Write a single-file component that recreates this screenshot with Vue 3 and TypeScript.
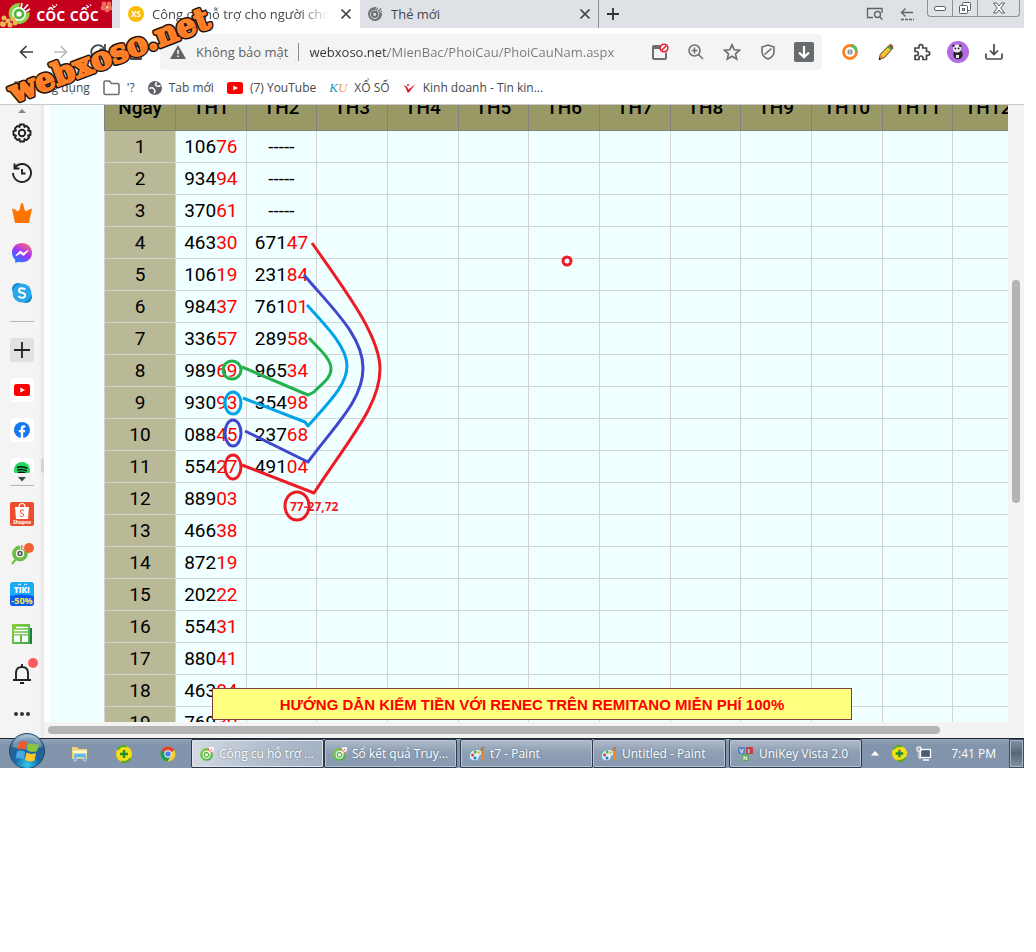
<script setup lang="ts">
interface ResultRow {
  day: number
  first: string
  second?: string
}

const months: string[] = Array.from({ length: 12 }, (_, i) => `TH${i + 1}`)

const rows: ResultRow[] = [
  { day: 1, first: '10676', second: '-----' },
  { day: 2, first: '93494', second: '-----' },
  { day: 3, first: '37061', second: '-----' },
  { day: 4, first: '46330', second: '67147' },
  { day: 5, first: '10619', second: '23184' },
  { day: 6, first: '98437', second: '76101' },
  { day: 7, first: '33657', second: '28958' },
  { day: 8, first: '98969', second: '96534' },
  { day: 9, first: '93093', second: '35498' },
  { day: 10, first: '08845', second: '23768' },
  { day: 11, first: '55427', second: '49104' },
  { day: 12, first: '88903' },
  { day: 13, first: '46638' },
  { day: 14, first: '87219' },
  { day: 15, first: '20222' },
  { day: 16, first: '55431' },
  { day: 17, first: '88041' },
  { day: 18, first: '46384' },
  { day: 19, first: '76930' },
]

const isNumber = (v?: string): boolean => !!v && v[0] !== '-'
</script>

<template>
  <div class="desktop">
    <svg class="defs" aria-hidden="true">
      <defs>
        <linearGradient id="gGreen" x1="0" y1="0" x2="1" y2="1">
          <stop offset="0" stop-color="#8ccf3f" /><stop offset="1" stop-color="#3fae49" />
        </linearGradient>
        <linearGradient id="gMess" x1="0.2" y1="1" x2="0.8" y2="0">
          <stop offset="0" stop-color="#0a8cff" /><stop offset="0.5" stop-color="#a033ff" /><stop offset="1" stop-color="#ff6b6b" />
        </linearGradient>
        <linearGradient id="gOrange" x1="0" y1="0" x2="0" y2="1">
          <stop offset="0" stop-color="#ff9a3c" /><stop offset="1" stop-color="#ff6618" />
        </linearGradient>
        <radialGradient id="gOrb" cx="0.5" cy="0.9" r="0.9">
          <stop offset="0" stop-color="#35c8ee" /><stop offset="0.4" stop-color="#1769a5" /><stop offset="0.75" stop-color="#2f5f8a" /><stop offset="1" stop-color="#a8c3d8" />
        </radialGradient>
      </defs>
      <symbol id="coccoc" viewBox="0 0 16 16">
        <circle cx="7.500" cy="8.500" r="7.300" fill="url(#gGreen)" />
        <circle cx="7.500" cy="8.800" r="4.500" fill="#fff" />
        <circle cx="7.500" cy="8.800" r="2.600" fill="none" stroke="#5dbb45" stroke-width="1.600" />
        <path d="M8.500 5L9.500 .5 16 0 15.500 6.500 11 8Z" fill="#fff" opacity=".9" />
        <path d="M9.500 4.500L10 1.500M11 5.500L13.500 2.500M12 7L15 5.500" stroke="#e8483b" stroke-width="1.100" />
      </symbol>
      <symbol id="coccocgray" viewBox="0 0 16 16">
        <path d="M9 1A7 7 0 1 0 15 7L12 7.500A4.500 4.500 0 1 1 8.500 4Z" fill="#6d7175" />
        <circle cx="7.700" cy="8.300" r="2.700" fill="none" stroke="#6d7175" stroke-width="2.200" />
        <path d="M9.500 4.500L10.500 1.500M11 5.500L14 2.500M12 7L15 5" stroke="#6d7175" stroke-width="1.200" />
      </symbol>
      <symbol id="cross" viewBox="0 0 12 12">
        <path d="M1.500 1.500L10.500 10.500M10.500 1.500L1.500 10.500" stroke="#3c4043" stroke-width="1.700" />
      </symbol>
      <symbol id="youtube" viewBox="0 0 16 12">
        <rect width="16" height="12" rx="2.500" fill="#f00" /><path d="M6.300 3.400L11 6 6.300 8.600Z" fill="#fff" />
      </symbol>
      <symbol id="paint" viewBox="0 0 16 16">
        <path d="M.5 11C0 6 4 3 9 3.500c5 .5 5 5.500 2.500 6-2 .5-1 2-2 3.500-1.500 2.500-8.500 2.500-9-2Z" fill="#d7edf8" stroke="#5b96bc" stroke-width=".7" />
        <circle cx="3.600" cy="9" r="1.500" fill="#e33b2e" /><circle cx="6.200" cy="6" r="1.400" fill="#45a83a" /><circle cx="9.800" cy="6.500" r="1.300" fill="#f3b21c" /><circle cx="6" cy="12" r="1.500" fill="#2a75cf" />
        <path d="M14.500 4V11L13 15.800 12 11 12 4Z" fill="#f18a22" /><path d="M11.300 5L12 1.500 15 .5 14.800 5Z" fill="#b9814a" />
      </symbol>
      <symbol id="plusball" viewBox="0 0 18 18">
        <circle cx="9" cy="9" r="8" fill="#f7de12" />
        <path d="M2.500 4.500A8 8 0 0 1 11.500 1.500M15.500 13.500A8 8 0 0 1 6.500 16.500" fill="none" stroke="#5cab28" stroke-width="2.200" />
        <path d="M9 5V13M5 9H13" stroke="#1d8f30" stroke-width="2.400" />
      </symbol>
    </svg>

    <header class="browser">
      <div class="tabstrip">
        <button class="brand" aria-label="Cốc Cốc">
          <svg class="brand-flower" viewBox="0 0 112 28" aria-hidden="true">
            <path d="M20 3A10.500 10.500 0 1 0 29.500 12L25 13A6 6 0 1 1 19 8Z" fill="#8ccf3f" />
            <circle cx="19" cy="14" r="7" fill="#fff" /><circle cx="19" cy="14" r="4" fill="none" stroke="#54b648" stroke-width="2.800" />
            <path d="M21 8L22 3M24 9L28 4.500M25 12L30 9" stroke="#fff" stroke-width="1.700" />
            <g fill="#e9b856">
              <circle cx="4" cy="18" r="2.500" /><circle cx="8" cy="21" r="2.500" /><circle cx="3" cy="24" r="3" /><circle cx="13" cy="19" r="2.500" /><circle cx="15" cy="23" r="2.500" /><circle cx="10" cy="25" r="2.500" />
            </g>
            <circle cx="4" cy="21" r="1.200" fill="#b9372a" /><circle cx="12" cy="22" r="1.200" fill="#b9372a" />
            <g fill="#ef6b5e">
              <circle cx="104" cy="4" r="2.400" /><circle cx="109" cy="4" r="2.400" /><circle cx="103" cy="8" r="2.400" /><circle cx="110" cy="8" r="2.400" /><circle cx="107" cy="10" r="2.400" />
            </g>
            <circle cx="107" cy="7" r="1.500" fill="#f9d47b" />
            <path d="M52 5l3 2M56 4l1 2M86 5l3 2M90 4l1 2" stroke="#fff" stroke-width="1" />
          </svg>
          <span>cốc cốc</span>
        </button>
        <div class="tab active">
          <span class="xs">XS</span>
          <span class="tab-title">Công cụ hỗ trợ cho người chơi</span>
          <button class="icon-btn" aria-label="Đóng thẻ"><svg width="12" height="12"><use href="#cross" /></svg></button>
        </div>
        <div class="tab">
          <svg width="16" height="16"><use href="#coccocgray" /></svg>
          <span class="tab-title">Thẻ mới</span>
          <button class="icon-btn" aria-label="Đóng thẻ"><svg width="12" height="12"><use href="#cross" /></svg></button>
        </div>
        <button class="icon-btn new-tab" aria-label="Thẻ mới">
          <svg width="12" height="12" viewBox="0 0 12 12"><path d="M6 0V12M0 6H12" stroke="#303336" stroke-width="1.800" /></svg>
        </button>
        <div class="strip-tools">
          <button class="icon-btn" aria-label="Tìm trong thẻ">
            <svg width="18" height="14" viewBox="0 0 18 14" fill="none" stroke="#5f6368" stroke-width="1.300"><path d="M7 10.500H1.500V1.500H16V6" /><circle cx="11.500" cy="7.500" r="3" /><path d="M13.800 9.800L16.500 12.800" /></svg>
          </button>
          <button class="icon-btn" aria-label="Quay lại">
            <svg width="14" height="14" viewBox="0 0 14 14" fill="none" stroke="#5f6368" stroke-width="1.300"><path d="M13 5.500H1.500M5.500 1.500L1.500 5.500 5.500 9.500" /><path d="M1 12.500H14" stroke-dasharray="3 1" /></svg>
          </button>
        </div>
        <div class="win-controls">
          <button aria-label="Thu nhỏ"><svg width="14" height="8" viewBox="0 0 14 8"><rect x="1.500" y="2.500" width="11" height="4" rx="1.500" fill="#fff" stroke="#5a5e66" /></svg></button>
          <button aria-label="Khôi phục"><svg width="14" height="14" viewBox="0 0 14 14" fill="#fff" stroke="#5a5e66"><rect x="4.500" y="1.500" width="8" height="8" rx="1" /><rect x="1.500" y="4.500" width="8" height="8" rx="1" /><rect x="4.500" y="7.500" width="2" height="2" /></svg></button>
          <button class="win-close" aria-label="Đóng"><svg width="14" height="12" viewBox="0 0 14 12"><path d="M1.500 1H4.500L7 4 9.500 1H12.500L8.700 6 12.500 11H9.500L7 8 4.500 11H1.500L5.300 6Z" fill="#fff" stroke="#5a5e66" /></svg></button>
        </div>
      </div>

      <nav class="toolbar">
        <div class="nav-buttons">
          <button class="icon-btn" aria-label="Trước"><svg width="14" height="14" viewBox="0 0 14 14" fill="none" stroke="#3c4043" stroke-width="1.700"><path d="M14 7H1.500M7.500 1L1.500 7 7.500 13" /></svg></button>
          <button class="icon-btn" aria-label="Sau"><svg width="14" height="14" viewBox="0 0 14 14" fill="none" stroke="#b8bbbe" stroke-width="1.700"><path d="M0 7H12.500M6.500 1L12.500 7 6.500 13" /></svg></button>
          <button class="icon-btn" aria-label="Tải lại"><svg width="18" height="18" viewBox="0 0 18 18" fill="none" stroke="#45494d" stroke-width="1.800"><path d="M15.500 6A7 7 0 1 0 16 11M16 1V6.500H10.500" /></svg></button>
          <button class="icon-btn" aria-label="Trang chủ"><svg width="16" height="18" viewBox="0 0 16 18" fill="none" stroke="#45494d" stroke-width="1.800"><path d="M1 8L8 2 15 8M3 7V16H13V7M7 16V11H10V16" /></svg></button>
        </div>
        <div class="address">
          <svg width="16" height="14" viewBox="0 0 16 14"><path d="M8 0L16 14H0Z" fill="#5f6368" /><path d="M8 5V9M8 10.500V12" stroke="#fff" stroke-width="1.500" /></svg>
          <span class="insecure">Không bảo mật</span>
          <input class="url" type="text" aria-label="Địa chỉ" value="webxoso.net/MienBac/PhoiCau/PhoiCauNam.aspx" />
          <div class="address-tools">
            <button class="icon-btn" aria-label="Chặn cửa sổ"><svg width="18" height="18" viewBox="0 0 18 18"><path d="M9 2H3Q1 2 1 4V15Q1 17 3 17H14Q16 17 16 15V9.500H14V15H3V6H9Z" fill="#6b6f73" /><circle cx="13" cy="5" r="3.800" fill="#fff" stroke="#e81c2e" stroke-width="1.600" /><path d="M10.500 7.500L15.500 2.500" stroke="#e81c2e" stroke-width="1.500" /></svg></button>
            <button class="icon-btn" aria-label="Thu phóng"><svg width="16" height="16" viewBox="0 0 16 16" fill="none" stroke="#6b6f73" stroke-width="1.500"><circle cx="6.500" cy="6.500" r="5.500" /><path d="M10.500 10.500L15 15M6.500 3.500V9.500M3.500 6.500H9.500" /></svg></button>
            <button class="icon-btn" aria-label="Đánh dấu"><svg width="18" height="18" viewBox="0 0 18 18" fill="none" stroke="#6b6f73" stroke-width="1.600"><path d="M9 1.800L11.200 6.700 16.500 7.200 12.500 10.800 13.700 16 9 13.200 4.300 16 5.500 10.800 1.500 7.200 6.800 6.700Z" /></svg></button>
            <button class="icon-btn" aria-label="Bảo vệ"><svg width="14" height="16" viewBox="0 0 14 16" fill="none" stroke="#6b6f73" stroke-width="1.600"><path d="M7 1L13 3V8Q13 12.500 7 15 1 12.500 1 8V3ZM3.500 10.500L10.500 4.500" /></svg></button>
            <button class="icon-btn" aria-label="Tải video"><svg width="20" height="20" viewBox="0 0 20 20"><rect width="20" height="20" rx="2" fill="#696c6e" /><path d="M10 4V15M5 10.500L10 15.200 15 10.500" fill="none" stroke="#fff" stroke-width="2.200" /></svg></button>
          </div>
        </div>
        <div class="extensions">
          <button class="icon-btn" aria-label="Tiết kiệm"><svg width="16" height="16" viewBox="0 0 16 16" fill="none"><circle cx="8" cy="8" r="6.500" stroke="#fb8122" stroke-width="2.800" /><path d="M9 1.600A6.500 6.500 0 0 1 14.400 7.500" stroke="#5fb76a" stroke-width="3" /><circle cx="8" cy="8" r="2.700" fill="#777e88" stroke="#c9ced2" /><path d="M8 6V10" stroke="#fff" /></svg></button>
          <button class="icon-btn" aria-label="Bút vẽ"><svg width="16" height="18" viewBox="0 0 16 18"><path d="M1 16.500L2.500 11 11 2.500 15 5 6.500 14.500Z" fill="#f6c62d" stroke="#3b3524" /><path d="M10 3.500L14 6.500" stroke="#37a346" stroke-width="1.800" /><path d="M11 2.500L12.500 1 15 3 14.500 5Z" fill="#ee4a3d" stroke="#3b3524" stroke-width=".5" /><path d="M2.500 11L6 14.500 1 16.500Z" fill="#e58b43" /><path d="M1 17V14.500L3.500 16Z" fill="#222" /></svg></button>
          <button class="icon-btn" aria-label="Tiện ích"><svg width="18" height="18" viewBox="0 0 18 18" fill="none" stroke="#45494d" stroke-width="1.700"><path d="M2 5H6V3.500A1.900 1.900 0 0 1 9.800 3.500V5H13.500V8.500H14.800A1.900 1.900 0 0 1 14.800 12.300H13.500V16.500H10V15A2 2 0 0 0 6 15V16.500H2V12.500H3.300A2 2 0 0 0 3.300 8.500H2Z" /></svg></button>
          <button class="icon-btn" aria-label="Hồ sơ"><svg width="22" height="22" viewBox="0 0 22 22"><circle cx="11" cy="11" r="11" fill="#b46ae0" /><ellipse cx="11" cy="13.500" rx="4.700" ry="4.800" fill="#26232b" /><circle cx="10" cy="7.500" r="4" fill="#eee" /><circle cx="6.500" cy="4.800" r="1.300" fill="#333" /><circle cx="13.200" cy="4.800" r="1.300" fill="#333" /><circle cx="8.400" cy="7.500" r=".9" fill="#222" /><circle cx="11.600" cy="7.500" r=".9" fill="#222" /><path d="M9 14H12V17H9Z" fill="#eee" /></svg></button>
          <button class="icon-btn" aria-label="Tải xuống"><svg width="18" height="18" viewBox="0 0 18 18" fill="none" stroke="#45494d" stroke-width="1.700"><path d="M1 10.500V14.500Q1 16 2.500 16H15.500Q17 16 17 14.500V10.500M9 1V11.500M5 7.500L9 11.500 13 7.500" /></svg></button>
        </div>
      </nav>

      <nav class="bookmarks">
        <a href="#"><svg width="14" height="14" viewBox="0 0 14 14" fill="none" stroke="#6b6f73" stroke-width="1.500"><rect x="1" y="1" width="4.500" height="4.500" /><rect x="8.500" y="1" width="4.500" height="4.500" /><rect x="1" y="8.500" width="4.500" height="4.500" /></svg>Ứng dụng</a>
        <a href="#"><svg width="17" height="16" viewBox="0 0 17 16" fill="none" stroke="#6b6f73" stroke-width="1.600"><path d="M1 2.500Q1 1 2.500 1H6.500L8.500 3.500H14.500Q16 3.500 16 5V13Q16 14.500 14.500 14.500H2.500Q1 14.500 1 13Z" /></svg>'?</a>
        <a href="#"><svg width="14" height="14" viewBox="0 0 14 14"><circle cx="7" cy="7" r="7" fill="#5f6368" /><path d="M1.500 7.500Q4 6 5.500 7.500T7 10.500Q6 11.500 6.500 12.500M12.500 4.500Q9.500 6 8 4.500T9 1.500" fill="none" stroke="#fff" stroke-width="1.500" /></svg>Tab mới</a>
        <a href="#"><svg width="16" height="12"><use href="#youtube" /></svg>(7) YouTube</a>
        <a href="#"><span class="ku">K<b>U</b></span>XỔ SỐ</a>
        <a href="#"><svg width="13" height="12" viewBox="0 0 13 12"><path d="M0 3L4 4.500 5.500 7.500 12.500 2 6 10.500H4.500L2.500 5.500Z" fill="#d71f35" /><circle cx="5" cy="3" r="1" fill="#d71f35" /></svg>Kinh doanh - Tin kin...</a>
      </nav>
    </header>

    <main class="body">
      <aside class="sidebar">
        <svg class="tri" width="8" height="8" viewBox="0 0 8 8"><path d="M0 8L4 4 8 8Z" fill="#888" /></svg>
        <button aria-label="Cài đặt"><svg width="20" height="20" viewBox="0 0 20 20" fill="none" stroke="#222" stroke-width="1.900"><path d="M8 1.500H12L12.500 4 14.500 2.900 17.100 5.500 16 7.500 18.500 8V12L16 12.500 17.100 14.500 14.500 17.100 12.500 16 12 18.500H8L7.500 16 5.500 17.100 2.900 14.500 4 12.500 1.500 12V8L4 7.500 2.900 5.500 5.500 2.900 7.500 4Z" stroke-linejoin="round" /><circle cx="10" cy="10" r="3.200" /></svg></button>
        <button aria-label="Lịch sử"><svg width="20" height="20" viewBox="0 0 20 20" fill="none" stroke="#222" stroke-width="1.900"><path d="M1 10A9 9 0 1 0 3 4.300M2.500 .5V5.500H7.500M10 6V10.500H13.500" /></svg></button>
        <button aria-label="Điểm thưởng"><svg width="20" height="20" viewBox="0 0 20 20"><path d="M0 5.500Q3 6 6 8.500Q8.500 6 8.500 2 9 0 10 0T11.500 2Q11.500 6 14 8.500 17 6 20 5.500L17 20H3Z" fill="#ff7300" /></svg></button>
        <button aria-label="Messenger"><svg width="20" height="20" viewBox="0 0 20 20"><path d="M10 0C4.300 0 0 4.100 0 9.600 0 12.500 1.200 15 3.200 16.700L3.300 20 6.500 18.700C12.500 20.500 20 17.500 20 9.600 20 4.100 15.700 0 10 0Z" fill="url(#gMess)" /><path d="M4 12.500L8.200 8 11.500 10.300 16 7.500 11.800 12.500 8.500 10.300Z" fill="#fff" stroke="#fff" /></svg></button>
        <button aria-label="Skype"><svg width="20" height="20" viewBox="0 0 20 20"><circle cx="6" cy="6" r="6" fill="#1583c5" /><circle cx="14" cy="14" r="6" fill="#1583c5" /><circle cx="10" cy="10" r="9.500" fill="#28a8ea" /><path d="M13.300 6.500Q12 5.200 9.800 5.200 7 5.300 7 7.400 7 9.200 10 9.800 13.200 10.500 13.200 12.500 13 14.800 10 14.800 7.500 14.800 6.500 13" fill="none" stroke="#fff" stroke-width="2" /></svg></button>
        <hr />
        <button aria-label="Thêm"><span class="tile plus"><svg width="16" height="16" viewBox="0 0 16 16"><path d="M8 0V16M0 8H16" stroke="#222" stroke-width="1.800" /></svg></span></button>
        <button aria-label="YouTube"><span class="tile"><svg width="16" height="12"><use href="#youtube" /></svg></span></button>
        <button aria-label="Facebook"><span class="tile"><svg width="16" height="16" viewBox="0 0 16 16"><circle cx="8" cy="8" r="8" fill="#1877f2" /><path d="M6.800 16V10.300H4.800V8H6.800V6.300Q6.800 3.300 9.700 3.300L11.300 3.500V5.400H10.300Q9.200 5.400 9.200 6.600V8H11.200L10.900 10.300H9.200V16Z" fill="#fff" /></svg></span></button>
        <button class="cut" aria-label="Spotify"><span class="tile"><svg width="16" height="16" viewBox="0 0 16 16"><circle cx="8" cy="8" r="8" fill="#1ed760" /><path d="M3 5.500Q8.500 3.500 13.500 6.300M3.500 8.200Q8.500 6.500 12.700 9M4 10.800Q8 9.500 11.800 11.500" stroke="#111" stroke-width="1.500" fill="none" /></svg></span></button>
        <svg class="tri down" width="8" height="5" viewBox="0 0 8 5"><path d="M0 0H8L4 4.500Z" fill="#444" /></svg>
        <hr class="tight" />
        <button aria-label="Shopee"><svg width="24" height="24" viewBox="0 0 24 24"><rect width="24" height="24" rx="2" fill="#ee4d2d" /><path d="M5 5H19L18 17H6Z" fill="#fff" /><path d="M9 5Q9 1.500 12 1.500T15 5" fill="none" stroke="#fff" stroke-width="1.200" /><path d="M14 8.500Q12.500 7.500 11 8T11 11Q14.500 11.800 13.800 13.500T9.800 14" fill="none" stroke="#ee4d2d" stroke-width="1" /><text x="12" y="22" text-anchor="middle" class="shopee">Shopee</text></svg></button>
        <button aria-label="Tìm kiếm Cốc Cốc"><svg width="24" height="24" viewBox="0 0 24 24"><path d="M2 22L7 16" stroke="#78bf3c" stroke-width="2" /><circle cx="10" cy="11.500" r="6" fill="#fff" stroke="#6abf45" stroke-width="3.800" /><circle cx="10" cy="11.500" r="2" fill="#ddd" stroke="#555" stroke-width="1.500" /><path d="M11.500 7L12 3M13.500 8L16.500 5" stroke="#fff" stroke-width="3" /><path d="M11.500 7L12 3M13.500 8L16.500 5" stroke="#e85037" stroke-width="1.200" /></svg><i class="dot orange"></i></button>
        <button aria-label="Tiki"><svg width="24" height="24" viewBox="0 0 24 24"><rect width="24" height="24" rx="3" fill="#1baaf4" /><path d="M0 14Q12 11 24 14V21Q24 24 21 24H3Q0 24 0 21Z" fill="#0d5df0" /><text x="12" y="11" text-anchor="middle" class="tiki">TIKI</text><text x="12" y="22" text-anchor="middle" class="sale">-50%</text><path d="M8 3Q9.500 1 11 3M14 3Q15.500 1 17 3" stroke="#fff" fill="none" /></svg></button>
        <button aria-label="Tin tức"><svg width="20" height="20" viewBox="0 0 20 20"><path d="M16 4H20V20H16Z" fill="#217d46" /><rect width="18" height="20" fill="url(#gGreen)" /><path d="M4 3.500H16M2 6.500H16M2 9.500H16" stroke="#fff" stroke-width="1.300" /><path d="M2 11.500H8V18H2ZM10 11.500H16V18H10Z" fill="#fff" /></svg></button>
        <button aria-label="Thông báo"><svg width="18" height="20" viewBox="0 0 18 20" fill="none" stroke="#222" stroke-width="1.900"><path d="M0 16H18M3 16V9Q3 3 9 3T15 9V16M9 0V3M7 19H11" /></svg><i class="dot red"></i></button>
        <button aria-label="Thêm tùy chọn"><svg width="16" height="4" viewBox="0 0 16 4" fill="#333"><circle cx="2" cy="2" r="2" /><circle cx="8" cy="2" r="2" /><circle cx="14" cy="2" r="2" /></svg></button>
        <i class="handle"></i>
      </aside>

      <section class="view">
        <div class="page-row">
          <div class="page">
            <table>
              <thead>
                <tr><th scope="col" class="day">Ngày</th><th v-for="m in months" :key="m" scope="col">{{ m }}</th></tr>
              </thead>
              <tbody>
                <tr v-for="r in rows" :key="r.day">
                  <th scope="row">{{ r.day }}</th>
                  <td>{{ r.first.slice(0, 3) }}<em>{{ r.first.slice(3) }}</em></td>
                  <td><template v-if="isNumber(r.second)">{{ r.second?.slice(0, 3) }}<em>{{ r.second?.slice(3) }}</em></template><template v-else>{{ r.second }}</template></td>
                  <td v-for="n in 10" :key="n"></td>
                </tr>
              </tbody>
            </table>
            <a class="promo" href="#">HƯỚNG DẪN KIẾM TIỀN VỚI RENEC TRÊN REMITANO MIỄN PHÍ 100%</a>
          </div>
          <div class="vscroll"><i></i></div>
        </div>
        <div class="hscroll"><i></i></div>
      </section>
    </main>

    <footer class="taskbar">
      <button class="start" aria-label="Start">
        <svg width="38" height="36" viewBox="0 0 38 36"><circle cx="19" cy="19" r="17.500" fill="url(#gOrb)" stroke="#1d4a6c" /><path d="M4 15Q7 3.500 19 3T34 15Q19 19 4 15Z" fill="#fff" opacity=".3" /><path d="M11 10Q15 8 19 10.500L17.500 18Q13.500 16 9.500 17.500Z" fill="#f0592a" /><path d="M20.500 11Q25 13.500 31 11.500L29 19Q24 21 19 18.500Z" fill="#8cc540" /><path d="M9 19.500Q13 17.500 17 20L15.500 27.500Q12 25 7.500 26.500Z" fill="#4ba6e4" /><path d="M18.500 20.500Q23 23 28 21L26.500 28.500Q22 30.500 17 28Z" fill="#fdc82e" /></svg>
      </button>
      <div class="quick">
        <button aria-label="Thư mục"><svg width="16" height="16" viewBox="0 0 16 16"><path d="M0 1H5L7 3H15V13H0Z" fill="#ecd27a" /><path d="M1 4.500H15V7H1Z" fill="#fff7ce" /><path d="M2 15V9Q2 7.500 3.500 7.500H12.500Q14 7.500 14 9V15H11.500V11.500H4.500V15Z" fill="#65b6e8" stroke="#c9e7f8" stroke-width=".6" /></svg></button>
        <button aria-label="Cốc Cốc Plus"><svg width="18" height="18"><use href="#plusball" /></svg></button>
        <button aria-label="Chrome"><svg width="16" height="16" viewBox="0 0 16 16"><circle cx="8" cy="8" r="7.500" fill="#f6c931" /><path d="M8 8L1.500 4.200A7.500 7.500 0 0 1 14.500 4.200Z" fill="#dc4437" /><path d="M8 8L1.500 4.200A7.500 7.500 0 0 0 7.500 15.500L11 9.500Z" fill="#1c9c58" /><circle cx="8" cy="8" r="3.700" fill="#fff" /><circle cx="8" cy="8" r="2.800" fill="#4a7fea" /></svg></button>
      </div>
      <div class="tasks">
        <button class="task current"><svg width="14" height="14"><use href="#coccoc" /></svg>Công cụ hỗ trợ ...</button>
        <button class="task"><svg width="14" height="14"><use href="#coccoc" /></svg>Sổ kết quả Truy...</button>
        <button class="task gap"><svg width="16" height="16"><use href="#paint" /></svg>t7 - Paint</button>
        <button class="task joined"><svg width="16" height="16"><use href="#paint" /></svg>Untitled - Paint</button>
        <button class="task gap"><svg width="16" height="14" viewBox="0 0 16 14"><rect width="7" height="7" rx="1" fill="#5a86c6" /><rect x="8" width="7" height="7" rx="1" fill="#c73f46" /><rect x="4" y="7" width="7" height="7" rx="1" fill="#5eae63" /><g class="unikey"><text x="1.500" y="6">V</text><text x="10" y="6">I</text><text x="5" y="13">N</text></g></svg>UniKey Vista 2.0</button>
      </div>
      <div class="tray">
        <button aria-label="Biểu tượng ẩn"><svg width="8" height="5" viewBox="0 0 8 5"><path d="M4 0L8 4.500H0Z" fill="#fff" /></svg></button>
        <button aria-label="Plus"><svg width="17" height="17"><use href="#plusball" /></svg></button>
        <button aria-label="Mạng"><svg width="16" height="15" viewBox="0 0 16 15"><rect x="4.500" y="3.500" width="10" height="8" fill="#4a5c73" stroke="#fff" stroke-width="1.300" /><path d="M7 14H13" stroke="#fff" stroke-width="1.500" /><path d="M1 1V5H5V1M3 5V12H5M2 0V3M4 0V3" fill="none" stroke="#fff" /></svg></button>
        <time>7:41 PM</time>
        <button class="peek" aria-label="Hiện màn hình"></button>
      </div>
    </footer>

    <!-- Hand-drawn marks linking the numbers, and the site's watermark -->
    <svg class="overlay" width="1024" height="768" fill="none" stroke-width="3" stroke-linejoin="round">
      <defs><text id="mark">webxoso.net</text></defs>
      <g stroke="#ed1c24">
        <path d="M312 243C345 290 380 336 380 369 380 405 350 438 314 493L242 465" />
        <ellipse cx="233" cy="467" rx="8" ry="12" /><ellipse cx="297" cy="506" rx="12" ry="14" /><circle cx="567" cy="261" r="4" />
      </g>
      <g stroke="#3f48cc"><path d="M304 275C332 308 363 336 363 368 363 400 336 424 308 462L245 431" /><ellipse cx="233" cy="433" rx="8" ry="13" /></g>
      <g stroke="#00a2e8"><path d="M307 305C327 327 347 347 347 366 347 385 329 402 308 426L305 422 243 398" /><ellipse cx="233" cy="403" rx="8" ry="11" /></g>
      <g stroke="#22b14c"><path d="M309 338C318 348 331 358 331 369 331 379 320 385 314 392L308 395 242 367" /><circle cx="232" cy="370" r="9" /></g>
      <text class="note" x="290" y="511">77-27,72</text>
      <g class="watermark" transform="translate(14 103) rotate(-21)">
        <use href="#mark" class="outline" /><use href="#mark" class="face" />
      </g>
    </svg>
  </div>
</template>

<style>
body { margin: 0; background: #fff; }
</style>

<style scoped>
.desktop { position: relative; margin-right: 12px; font: 13px/18px "Open Sans", "Noto Sans", sans-serif; color: #45494d; overflow: hidden; }
.desktop *, .desktop *::before { box-sizing: border-box; }
.defs { position: absolute; width: 0; height: 0; }
button { font: inherit; color: inherit; border: 0; padding: 0; margin: 0; background: none; display: flex; align-items: center; justify-content: center; flex: none; }
svg { display: block; flex: none; }
a { text-decoration: none; color: inherit; }

.tabstrip { display: flex; align-items: center; height: 28px; background: #dee1e6; }
.brand { position: relative; width: 112px; height: 28px; margin-right: 8px; background: #c4001d; color: #fff; font: 600 18px/28px "Open Sans", sans-serif; }
.brand-flower { position: absolute; inset: 0; }
.brand span { padding-left: 23px; }
.tab { display: flex; align-items: center; gap: 8px; width: 239px; height: 28px; padding: 0 7px; flex: none; border-right: 1px solid #8a8d91; }
.tab.active { width: 240px; background: #fff; border: 0; padding: 0 8px; }
.tab-title { flex: 1; overflow: hidden; white-space: nowrap; }
.active .tab-title { mask-image: linear-gradient(90deg, #000 82%, transparent 98%); }
.xs { width: 16px; height: 16px; border-radius: 8px; background: #fbbc05; color: #fff; font: 700 8px/16px "Open Sans", sans-serif; text-align: center; }
.new-tab { margin-left: 8px; }
.strip-tools { display: flex; align-items: center; gap: 16px; margin-left: auto; margin-right: 13px; }
.win-controls { display: flex; align-self: flex-start; height: 17px; margin-right: 4px; border: 1px solid #8b8f96; border-top: 0; border-radius: 0 0 4px 4px; }
.win-controls button { width: 25px; height: 16px; border-right: 1px solid #8b8f96; }
.win-controls .win-close { width: 41px; border: 0; }

.toolbar { display: flex; align-items: center; height: 48px; }
.nav-buttons { display: flex; align-items: center; gap: 21px; width: 160px; padding-left: 19px; }
.address { display: flex; align-items: center; flex: 1; min-width: 0; height: 36px; padding: 0 8px 0 10px; background: #f4f4f4; border-radius: 4px; }
.insecure { margin-left: 10px; padding-right: 10px; border-right: 1px solid #8a8d91; white-space: nowrap; color: #5f6368; }
.url { flex: 1; min-width: 0; margin-left: 10px; padding: 0; border: 0; outline: 0; font: inherit; color: transparent; background: linear-gradient(90deg, #303336 79px, #75797d 79px); -webkit-background-clip: text; background-clip: text; }
.address-tools { display: flex; gap: 16px; }
.address-tools button { width: 20px; }
.extensions { display: flex; align-items: center; gap: 14px; padding: 0 19px 0 17px; }
.extensions button { width: 22px; }

.bookmarks { display: flex; align-items: center; gap: 13px; height: 29px; padding: 0 14px 4px; border-bottom: 1px solid #c8cacd; font-size: 12px; white-space: nowrap; }
.bookmarks a { display: flex; align-items: center; gap: 7px; }
.ku { font: italic 13px/14px "Liberation Serif", serif; color: #1593c6; }
.ku b { font-weight: 400; color: #ef9a4a; }

.body { display: flex; }
.sidebar { position: relative; display: flex; flex-direction: column; align-items: center; width: 44px; height: 633px; flex: none; background: linear-gradient(90deg, #f4f4f4 88%, #e6e6e6); }
.sidebar button { position: relative; width: 44px; height: 40px; }
.sidebar hr { width: 24px; height: 1px; margin: 8px 0; border: 0; background: #b4b6b8; flex: none; }
.sidebar hr.tight { margin-top: 0; }
.tri.down { margin: 4px 0 3px; }
.tile { display: flex; align-items: center; justify-content: center; width: 24px; height: 24px; border-radius: 3px; background: #fff; }
.tile.plus { background: #e1e1e1; }
.sidebar .cut { height: 23px; padding-top: 8px; align-items: flex-start; overflow: hidden; }
.dot { position: absolute; border-radius: 50%; width: 10px; height: 10px; right: 6px; top: 4px; }
.dot.orange { background: #f16334; right: 10px; top: 9px; }
.dot.red { background: #ff5a62; }
.handle { position: absolute; right: 0; top: 353px; width: 3px; height: 15px; border-radius: 3px 0 0 3px; background: #d4d4d4; }
.shopee { font: 700 5px "Open Sans", sans-serif; fill: #fff; }
.tiki { font: 800 8px "Open Sans", sans-serif; fill: #fff; }
.sale { font: 700 9px "Open Sans", sans-serif; fill: #ffe94d; }

.view { flex: 1; min-width: 0; background: #f3f3f3; }
.page-row { display: flex; height: 617px; }
.page { position: relative; flex: 1; min-width: 0; overflow: hidden; padding-left: 54px; border-left: 6px solid #fff; background: #f0ffff; }
table { width: calc(100% + 16px); margin-top: -20px; table-layout: fixed; border-spacing: 0; font: 19px/24px Roboto, sans-serif; color: #000; }
th, td { height: 32px; padding: 0; border: 0 solid #d3d3d3; border-width: 0 1px 1px 0; text-align: center; font-weight: 400; }
th:first-child { border-left-width: 1px; }
thead th { height: 46px; border-color: #808080; background: #999966; font-weight: 500; }
.day { width: 72px; }
tbody th { background: #b9b997; }
em { font-style: normal; color: #f00; }
.promo { position: absolute; left: 162px; right: 156px; bottom: 2px; height: 32px; border: 1px solid #843c3c; background: #ffff80; color: #f00; font: 700 15px/32px "Liberation Sans", Arial, sans-serif; text-align: center; white-space: nowrap; }
.vscroll { width: 16px; padding: 175px 4px 0; }
.vscroll i { display: block; height: 223px; border-radius: 4px; background: #b4b4b4; }
.hscroll { height: 16px; padding: 4px 84px 4px 4px; }
.hscroll i { display: block; height: 8px; border-radius: 4px; background: #b4b4b4; }

.taskbar { position: relative; display: flex; height: 30px; border-top: 1px solid #20262f; background: linear-gradient(#94a5ba, #8194ab 20%, #8395ad); color: #fff; font-size: 12px; }
.start { position: absolute; left: 8px; bottom: 0; width: 38px; }
.quick { display: flex; align-items: center; gap: 26px; width: 191px; flex: none; padding-left: 71px; }
.quick button { width: 18px; }
.tasks { display: flex; }
.task { width: 133px; height: 29px; padding: 0 8px; gap: 5px; justify-content: flex-start; border: 1px solid #2c3a4b; border-radius: 2px; background: linear-gradient(#aebac9, #8f9fb4 45%, #8799b0); box-shadow: inset 0 0 0 1px #b9c4d1; white-space: nowrap; text-shadow: 0 0 2px #5a6a7f; }
.task.current { background: linear-gradient(100deg, #d3dae3, #b0bccc 60%, #a2b0c3); box-shadow: inset 0 0 0 1px #e2e7ed; }
.task.gap { margin-left: 3px; }
.task.joined { border-left: 0; }
.tray { display: flex; align-items: center; flex: 1; padding-left: 9px; }
.tray button + button { margin-left: 12px; }
.tray button + button + button { margin-left: 8px; }
.tray time { margin-left: auto; margin-right: 13px; }
.tray .peek { width: 15px; height: 29px; border: 1px solid #3e4c5e; background: linear-gradient(#8291a3, #58677a 50%, #8393a5); box-shadow: inset 0 0 0 1px #a8b5c4; }
.unikey { font: 700 6px "Liberation Sans", sans-serif; fill: #fff; }

.overlay { position: absolute; left: 0; top: 0; pointer-events: none; }
.note { font: 700 12px "Open Sans", sans-serif; fill: #ed1c24; stroke: none; }
.watermark { font: 700 31px "DejaVu Serif", serif; }
.outline { stroke: #1c1410; stroke-width: 5px; }
.face { fill: url(#gOrange); stroke: #ff8128; stroke-width: 2px; }
</style>
